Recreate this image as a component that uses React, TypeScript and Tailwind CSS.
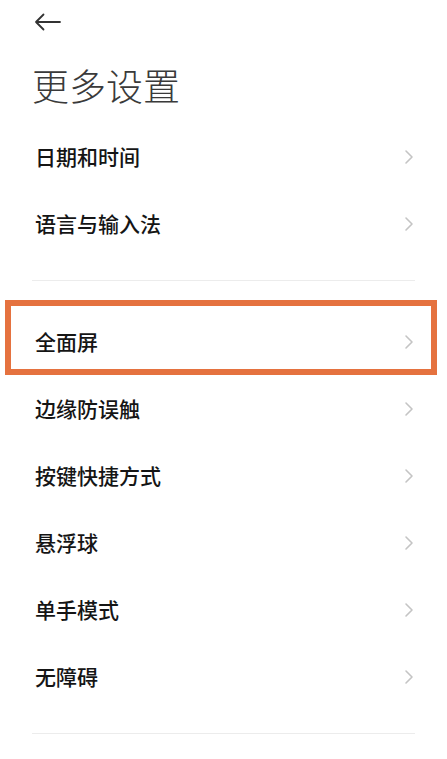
import React from 'react';

const font = { fontFamily: '"Noto Sans CJK SC", "Noto Sans", sans-serif' };

const Chevron: React.FC = () => (
  <svg width="10" height="16" viewBox="0 0 10 16" fill="none">
    <path d="M2 2l6 6-6 6" stroke="#c4c4c4" strokeWidth="1.6" strokeLinecap="round" strokeLinejoin="round" />
  </svg>
);

const Row: React.FC<{ label: string; highlight?: boolean }> = ({ label, highlight }) => (
  <div className="relative flex items-center justify-between h-[67px] pl-[35px] pr-[33px]">
    <span className="text-[21px] font-medium text-[#151515] leading-none">{label}</span>
    <Chevron />
    {highlight && (
      <div className="absolute -top-[8px] bottom-0 left-[5px] right-[10px] border-[6px] border-[#e5723f] pointer-events-none" />
    )}
  </div>
);

const Divider: React.FC<{ className?: string }> = ({ className = '' }) => (
  <div className={`mx-[32px] h-px bg-[#ececec] ${className}`} />
);

export default function App() {
  return (
    <div className="w-[447px] h-[759px] bg-white overflow-hidden" style={font}>
      <div className="pt-[10px] pl-[34px]">
        <svg width="28" height="24" viewBox="0 0 28 24" fill="none">
          <path d="M2 12h24M9.5 4.5L2 12l7.5 7.5" stroke="#333" strokeWidth="1.8" strokeLinecap="round" strokeLinejoin="round" />
        </svg>
      </div>
      <h1 className="mt-[29px] pl-[32px] text-[37px] leading-[44px] font-light text-[#3a3a3a]">更多设置</h1>
      <div className="mt-[16px]">
        <Row label="日期和时间" />
        <Row label="语言与输入法" />
      </div>
      <Divider className="mt-[23px] mb-[27px]" />
      <div>
        <Row label="全面屏" highlight />
        <Row label="边缘防误触" />
        <Row label="按键快捷方式" />
        <Row label="悬浮球" />
        <Row label="单手模式" />
        <Row label="无障碍" />
      </div>
      <Divider className="mt-[23px]" />
    </div>
  );
}
